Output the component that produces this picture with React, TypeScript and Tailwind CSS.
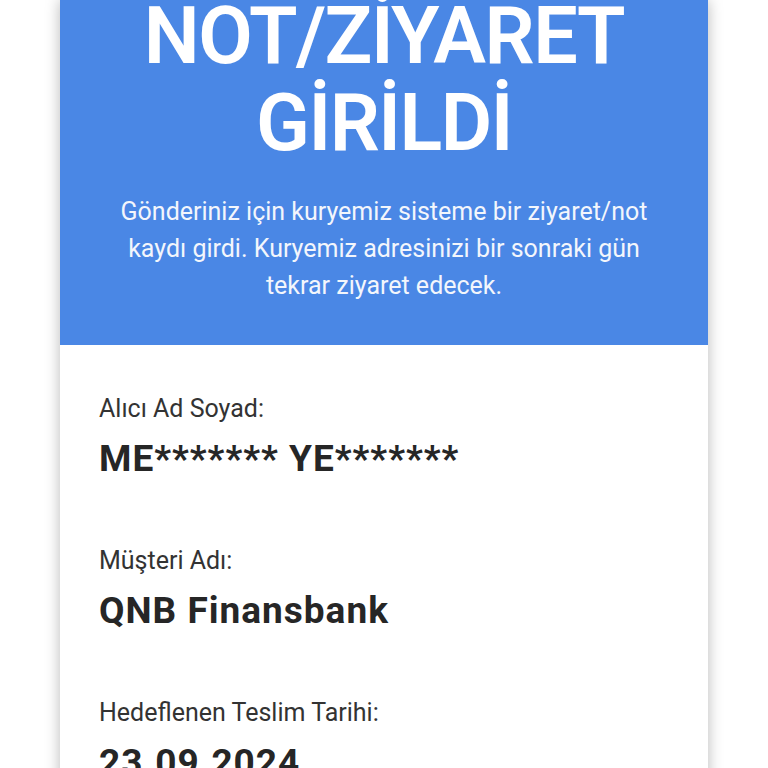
import React from "react";

const font = { fontFamily: "Roboto, 'Noto Sans', sans-serif" };

function Field({ label, value }: { label: string; value: string }) {
  return (
    <div className="flex flex-col">
      <div className="text-[25px] leading-[30px] text-[#333333]">{label}</div>
      <div className="mt-[13px] text-[37px] leading-[44px] font-bold tracking-[1px] text-[#262626]">{value}</div>
    </div>
  );
}

export default function App() {
  return (
    <div className="w-full min-h-screen bg-white flex justify-center overflow-hidden" style={font}>
      <div className="w-[648px] bg-white shadow-[0_0_14px_rgba(0,0,0,0.28)] flex flex-col">
        <div className="bg-[#4a87e5] px-10 pb-[41px] flex flex-col items-center text-center">
          <h1 className="-mt-[7px] text-[79px] leading-[87px] font-semibold tracking-[-1.5px] text-white">
            NOT/ZİYARET
            <br />
            GİRİLDİ
          </h1>
          <p className="mt-[26px] text-[25px] leading-[37px] text-[#f3f6fc]">
            Gönderiniz için kuryemiz sisteme bir ziyaret/not kaydı girdi. Kuryemiz adresinizi bir sonraki gün tekrar ziyaret edecek.
          </p>
        </div>
        <div className="px-[39px] pt-[49px] flex flex-col gap-[65px]">
          <Field label="Alıcı Ad Soyad:" value="ME******* YE*******" />
          <Field label="Müşteri Adı:" value="QNB Finansbank" />
          <Field label="Hedeflenen Teslim Tarihi:" value="23.09.2024" />
        </div>
      </div>
    </div>
  );
}
